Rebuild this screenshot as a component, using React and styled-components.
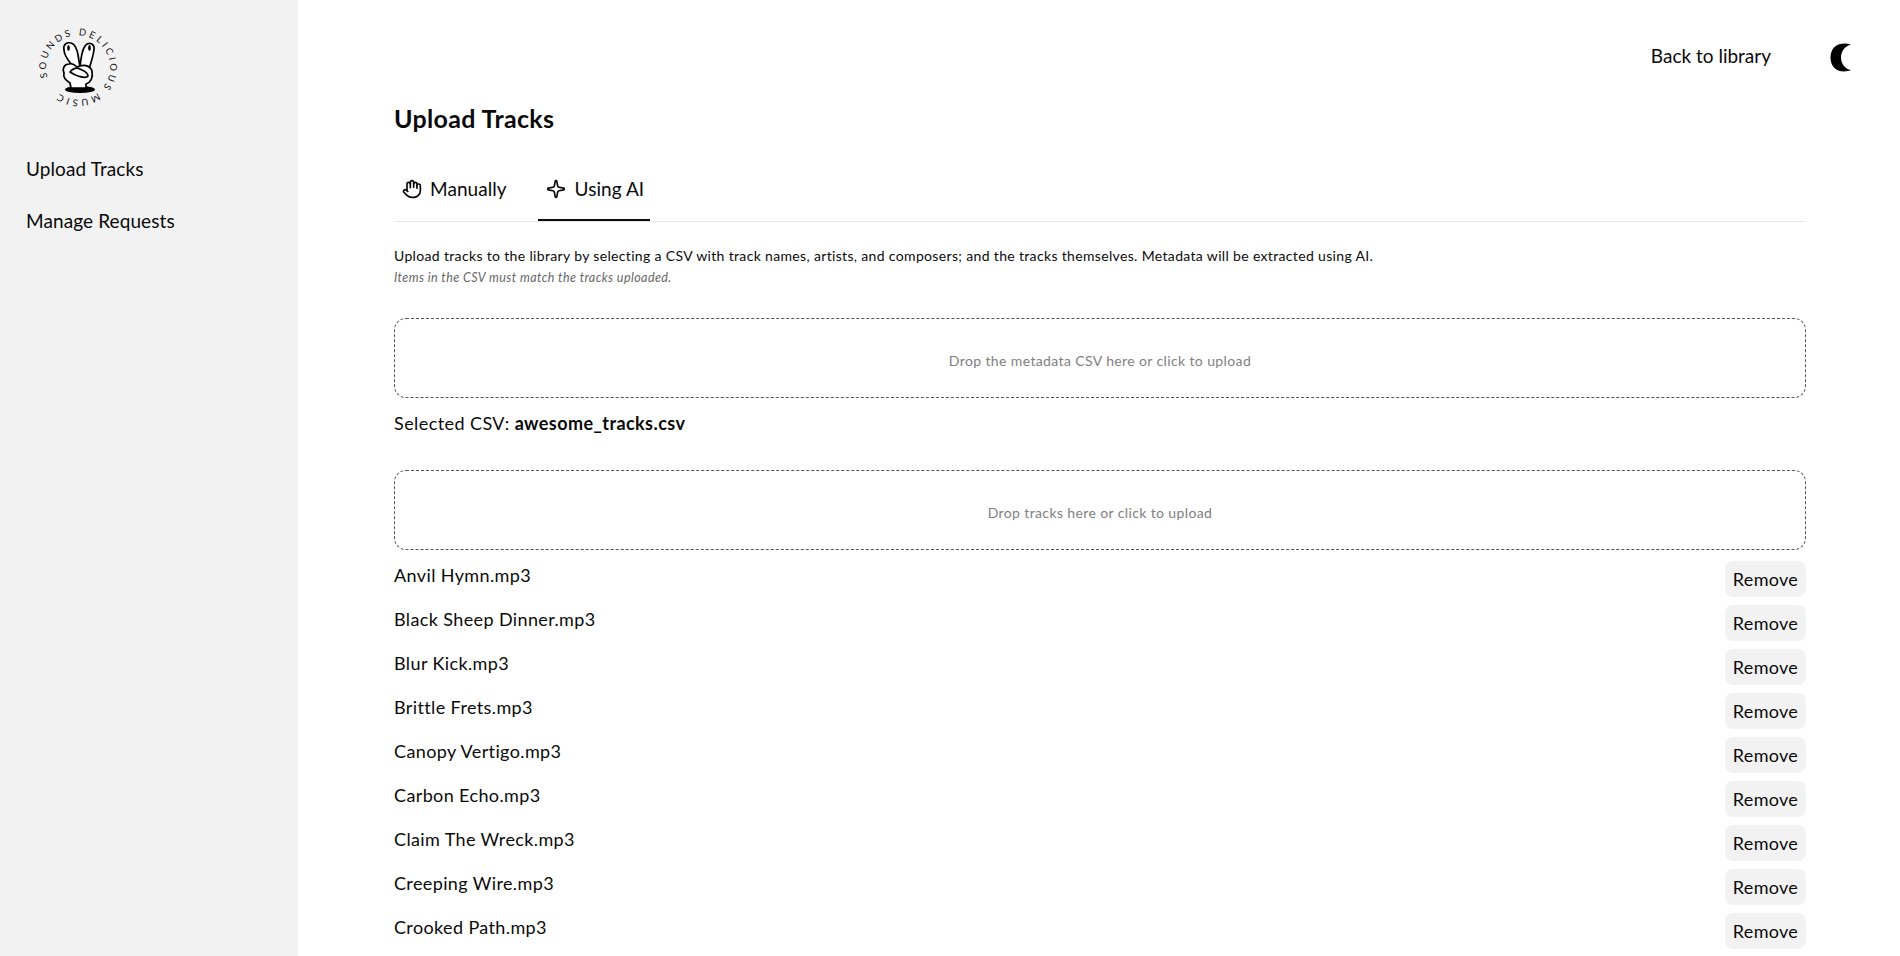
import React from "react";
import styled, { createGlobalStyle } from "styled-components";
import { Hand, Sparkle } from "lucide-react";

const Global = createGlobalStyle`
  html, body { margin: 0; padding: 0; height: 100%; overflow: hidden; background: #fff; }
  body { font-family: "Lato", "Open Sans", sans-serif; color: #0a0a0a; }
  * { box-sizing: border-box; }
`;

const Page = styled.div`
  display: flex;
  height: 956px;
  overflow: hidden;
`;
const Sidebar = styled.aside`
  width: 298px;
  flex: none;
  background: #f2f2f2;
  padding: 15px 0 0 26px;
`;
const LogoBox = styled.svg`
  display: block;
  width: 110px;
  height: 100px;
  margin: 0 0 43px -6px;
`;
const Nav = styled.nav`
  display: flex;
  flex-direction: column;
  gap: 30px;
`;
const NavLink = styled.a`
  font-size: 19px;
  line-height: 22px;
  letter-spacing: 0.1px;
`;
const Main = styled.main`
  flex: 1;
  min-width: 0;
  padding: 42px 94px 0 96px;
`;
const TopBar = styled.div`
  display: flex;
  justify-content: flex-end;
  align-items: center;
  height: 28px;
  gap: 59px;
  margin-right: -46px;
`;
const BackLink = styled.a`
  font-size: 19px;
  letter-spacing: 0;
  line-height: 28px;
`;
const Moon = styled.svg`
  width: 22px;
  height: 29px;
  display: block;
  margin-top: 2px;
`;
const Title = styled.h1`
  font-size: 25px;
  line-height: 30px;
  font-weight: 700;
  letter-spacing: 0.35px;
  margin: 33px 0 0;
`;
const Tabs = styled.div`
  display: flex;
  height: 67px;
  margin-top: 22px;
  border-bottom: 1px solid #e5e5e5;
`;
const Tab = styled.button`
  all: unset;
  box-sizing: border-box;
  display: flex;
  align-items: center;
  gap: ${(p) => p.$iconGap}px;
  height: 66px;
  padding: 3px ${(p) => p.$right}px 0 ${(p) => p.$left}px;
  margin-right: ${(p) => p.$after || 0}px;
  font-size: 19px;
  letter-spacing: 0.05px;
  border-bottom: 2px solid ${(p) => (p.$active ? "#0a0a0a" : "transparent")};
`;
const Description = styled.p`
  font-size: 14px;
  line-height: 18px;
  letter-spacing: 0.34px;
  margin: 25px 0 0;
`;
const Hint = styled.p`
  font-size: 12.5px;
  line-height: 16px;
  font-style: italic;
  letter-spacing: 0.42px;
  color: #666;
  margin: 5px 0 0;
`;
const DropZone = styled.div`
  height: 80px;
  margin-top: ${(p) => p.$top}px;
  padding-top: 4px;
  border: 1px dashed #555;
  border-radius: 12px;
  display: flex;
  align-items: center;
  justify-content: center;
  font-size: 14px;
  letter-spacing: 0.38px;
  color: #808080;
`;
const Selected = styled.p`
  font-size: 18px;
  line-height: 24px;
  letter-spacing: 0.42px;
  margin: 13px 0 0;
  b { font-weight: 700; }
`;
const Rows = styled.div`
  display: flex;
  flex-direction: column;
  gap: 8px;
  margin-top: 11px;
`;
const Row = styled.div`
  display: flex;
  justify-content: space-between;
  align-items: flex-start;
  height: 36px;
`;
const FileName = styled.span`
  font-size: 18px;
  line-height: 28px;
  letter-spacing: 0.38px;
`;
const RemoveButton = styled.button`
  all: unset;
  width: 81px;
  height: 36px;
  background: #f2f2f2;
  border-radius: 8px;
  text-align: center;
  font-size: 18px;
  line-height: 36px;
  letter-spacing: 0.3px;
`;

const files = [
  "Anvil Hymn.mp3",
  "Black Sheep Dinner.mp3",
  "Blur Kick.mp3",
  "Brittle Frets.mp3",
  "Canopy Vertigo.mp3",
  "Carbon Echo.mp3",
  "Claim The Wreck.mp3",
  "Creeping Wire.mp3",
  "Crooked Path.mp3",
];

function Logo() {
  return (
    <LogoBox viewBox="0 0 110 100" aria-label="Sounds Delicious Music">
      <defs>
        <path id="logo-ring" d="M 27.6 62.4 A 32 32 0 1 1 88.4 62.4 A 32 32 0 0 1 27.6 62.4" />
      </defs>
      <text fontFamily="Lato, sans-serif" fontSize="9.5" letterSpacing="2.7" fill="#111">
        <textPath href="#logo-ring">
          SOUNDS DELICIOUS<tspan dx="5">MUSIC</tspan>
        </textPath>
      </text>
      <ellipse cx="60" cy="74.5" rx="15" ry="3.6" fill="#000" />
      <g fill="#fff" stroke="#000" strokeWidth="1.7" strokeLinejoin="round">
        <path d="M56 56 C51 48 44 42 44 35 C43 29 47 27 51 28 C55 29 57 34 58 40 L60 52 Z" />
        <path d="M60 52 C61 42 62 35 65 31 C68 27 73 28 74 32 C75 37 71 46 68 58 Z" />
        <path d="M51 73 L50 68 C45 65 43 62 44 58 C42 54 44 49 49 49 C52 48 55 50 57 52 C63 49 70 50 72 56 C73 62 71 67 66 69 L66 73 Z" />
        <path d="M50 57 C52 54 56 52 60 54 C64 56 68 57 68 61 C66 64 62 62 58 61 C55 60 53 59 50 57 Z" />
      </g>
      <ellipse cx="48.5" cy="33" rx="1.4" ry="3" fill="#000" />
      <ellipse cx="69.5" cy="33" rx="1.4" ry="3" fill="#000" />
    </LogoBox>
  );
}

export default function App() {
  return (
    <>
      <Global />
      <Page>
        <Sidebar>
          <Logo />
          <Nav>
            <NavLink>Upload Tracks</NavLink>
            <NavLink>Manage Requests</NavLink>
          </Nav>
        </Sidebar>
        <Main>
          <TopBar>
            <BackLink>Back to library</BackLink>
            <Moon viewBox="0 0 21 29">
              <path
                d="M20.5 1.5 C15 -0.5 7 0 3 5 C-1 10 -1 19 3 24 C7 29 15 29.5 20.5 27 C14 26 10.5 20 10.5 14.5 C10.5 9 14 3 20.5 1.5 Z"
                fill="#000"
              />
            </Moon>
          </TopBar>
          <Title>Upload Tracks</Title>
          <Tabs>
            <Tab $left={8} $right={10} $iconGap={8} $after={21}>
              <Hand size={20} strokeWidth={2} />
              Manually
            </Tab>
            <Tab $active $left={8} $right={6} $iconGap={9}>
              <Sparkle size={20} strokeWidth={2} />
              Using AI
            </Tab>
          </Tabs>
          <Description>
            Upload tracks to the library by selecting a CSV with track names, artists, and composers; and the tracks themselves. Metadata will be extracted using AI.
          </Description>
          <Hint>Items in the CSV must match the tracks uploaded.</Hint>
          <DropZone $top={32}>Drop the metadata CSV here or click to upload</DropZone>
          <Selected>
            Selected CSV: <b>awesome_tracks.csv</b>
          </Selected>
          <DropZone $top={35}>Drop tracks here or click to upload</DropZone>
          <Rows>
            {files.map((f) => (
              <Row key={f}>
                <FileName>{f}</FileName>
                <RemoveButton>Remove</RemoveButton>
              </Row>
            ))}
          </Rows>
        </Main>
      </Page>
    </>
  );
}
